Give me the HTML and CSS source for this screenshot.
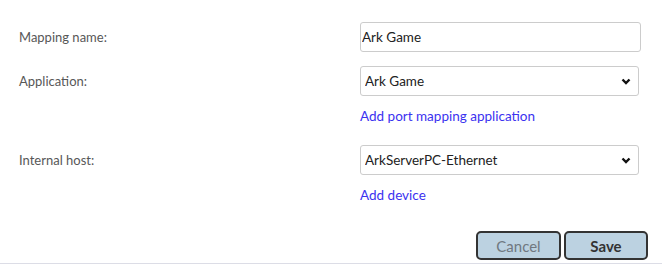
FILE: index.html
```html
<!DOCTYPE html>
<html>

<head>
    <link rel="stylesheet" href="styles.css">
</head>

<body>
    <form id="mappingForm">
        <div class="row row-name">
            <label for="mappingName">Mapping name:</label>
            <div class="field">
                <input type="text" id="mappingName" value="Ark Game" />
            </div>
        </div>

        <div class="row row-app">
            <label for="application">Application:</label>
            <div class="field">
                <div class="selectWrap">
                    <select id="application">
                        <option>Ark Game</option>
                    </select>
                    <svg class="chevron" width="10" height="7" viewBox="0 0 10 7">
                        <path d="M1.5 1.5 L5 5 L8.5 1.5" fill="none" stroke="#111" stroke-width="2.4" />
                    </svg>
                </div>
                <a href="#" class="addLink">Add port mapping application</a>
            </div>
        </div>

        <div class="row row-host">
            <label for="internalHost">Internal host:</label>
            <div class="field">
                <div class="selectWrap">
                    <select id="internalHost">
                        <option>ArkServerPC-Ethernet</option>
                    </select>
                    <svg class="chevron" width="10" height="7" viewBox="0 0 10 7">
                        <path d="M1.5 1.5 L5 5 L8.5 1.5" fill="none" stroke="#111" stroke-width="2.4" />
                    </svg>
                </div>
                <a href="#" class="addLink">Add device</a>
            </div>
        </div>

        <div class="actions">
            <button type="button" class="btn btn-cancel">Cancel</button>
            <button type="submit" class="btn btn-save">Save</button>
        </div>
    </form>
</body>

</html>
```

FILE: styles.css
```css
body {
    font-family: Lato, "Open Sans", sans-serif;
    font-size: 13px;
    margin: 0;
    padding: 0;
    background-color: #fff;
    color: #555;
}

#mappingForm {
    width: 662px;
    padding-top: 22px;
    border-bottom: 1px solid #dcdde6;
}

.row {
    display: grid;
    grid-template-columns: 341px 280px;
    padding-left: 19px;
}

.row label {
    line-height: 30px;
    color: #575757;
}

.row-name {
    margin-bottom: 14px;
}

.row-app {
    margin-bottom: 19px;
}

.field {
    display: flex;
    flex-direction: column;
    align-items: flex-start;
}

input[type=text],
select {
    font-family: inherit;
    font-size: 13.5px;
    color: #222;
    height: 30px;
    border: 1px solid #ccc;
    border-radius: 3px;
    box-sizing: border-box;
    background-color: #fff;
    outline: none;
}

input[type=text] {
    width: 281px;
    padding: 0 1px;
}

.selectWrap {
    position: relative;
    width: 279px;
}

select {
    width: 279px;
    padding: 0 4px;
    appearance: none;
    -webkit-appearance: none;
}

.chevron {
    position: absolute;
    right: 8px;
    top: 12px;
}

.addLink {
    margin-top: 10px;
    font-size: 13.5px;
    line-height: 20px;
    color: #3b32f0;
    text-decoration: none;
}

.actions {
    display: flex;
    justify-content: flex-end;
    gap: 3px;
    padding-right: 14px;
    margin-top: 26px;
    margin-bottom: 3px;
}

.btn {
    font-family: inherit;
    font-size: 15px;
    height: 29px;
    border: 2px solid #333;
    border-radius: 5px;
    background-color: #bcd2e1;
    cursor: pointer;
}

.btn-cancel {
    width: 85px;
    color: #707880;
}

.btn-save {
    width: 84px;
    color: #333;
    font-weight: bold;
}
```
